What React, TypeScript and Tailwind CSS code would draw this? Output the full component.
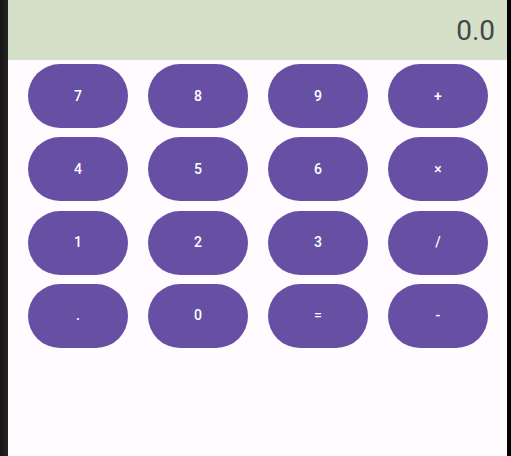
const keys = ["7", "8", "9", "+", "4", "5", "6", "×", "1", "2", "3", "/", ".", "0", "=", "-"];

export default function App() {
  return (
    <div className="flex h-[456px] w-[511px] bg-black font-['Roboto',sans-serif]">
      <div className="w-[8px] bg-gradient-to-r from-[#151515] to-[#262626]" />
      <div className="flex w-[499px] flex-col bg-[#fffbfe]">
        <div className="flex h-[60px] items-center justify-end bg-[#d4e0c7] pr-[12px] pt-[2px] text-[28px] text-[#44464a]">
          0.0
        </div>
        <div className="grid grid-cols-[repeat(4,100px)] gap-x-[20px] gap-y-[9.33px] pl-[20px] pt-[4px]">
          {keys.map((k) => (
            <button
              key={k}
              className="flex h-[64px] items-center justify-center rounded-full bg-[#6750a4] text-[14px] font-medium text-white"
            >
              {k}
            </button>
          ))}
        </div>
      </div>
      <div className="flex-1 bg-black" />
    </div>
  );
}
